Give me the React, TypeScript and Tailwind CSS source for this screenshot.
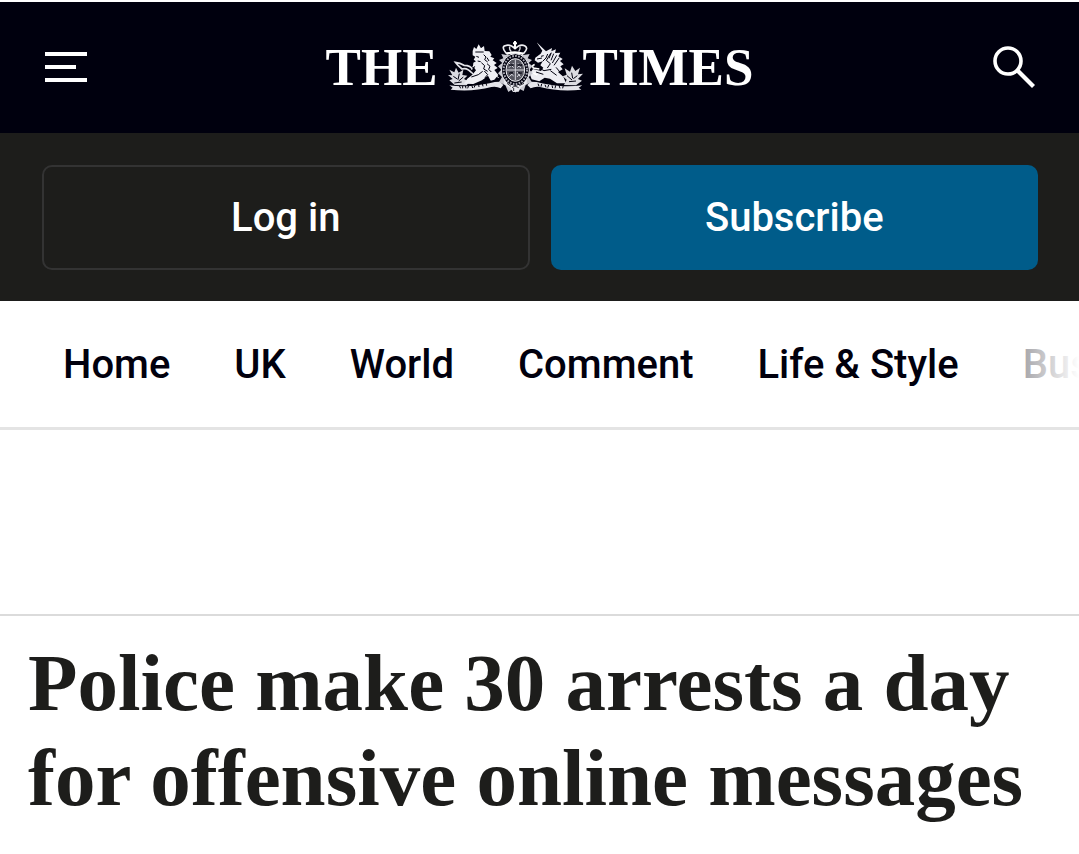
const sections = ["Home", "UK", "World", "Comment", "Life & Style", "Business"];

function Crest() {
  return (
    <svg viewBox="30 18 405 156" className="ml-2.5 h-[52px] w-[135px] shrink-0" fill="none" aria-hidden="true">
      {/* motto ribbon */}
      <path d="M34 151 Q62 155 98 153 Q140 149 170 141 L186 140 L196 150 L188 160 Q176 153 160 156 Q104 171 38 164 L44 158Z" fill="#e4e4ea" />
      <path d="M433 151 Q400 155 366 153 Q324 149 296 141 L278 140 L268 150 L278 160 Q292 153 306 156 Q364 171 430 164 L422 158Z" fill="#e4e4ea" />
      <path d="M64 152l4 8m6-8v8m8-8l2 8m8-9l-3 9m12-10l3 9m8-10l-4 9m14-10l1 8m10-10l2 8m9-10l2 8" stroke="#00000e" strokeWidth="3" />
      <path d="M300 146l3 8m8-7l-2 8m12-6l3 8m8-7l-3 8m13-7l2 8m9-8l-2 9m12-9l3 9m10-9l-2 9" stroke="#00000e" strokeWidth="3" />
      {/* thistles and roses at the ends */}
      <path d="M50 150 L34 136 L44 132 L30 120 L43 121 L34 104 L49 112 L54 98 L62 113 L76 104 L73 120 L88 122 L78 132 L94 140 L86 151Z" fill="#dcdce2" />
      <path d="M414 151 L432 137 L420 132 L435 116 L420 118 L426 98 L412 108 L402 92 L396 110 L380 100 L386 119 L374 124 L386 134 L378 150Z" fill="#dcdce2" />
      <path d="M46 124l12 8m6-16l-4 18m16-8l-14 12M418 122l-12 9m-5-18l3 17m-17-8l15 13m-9 5l21-2M49 144l22-3" stroke="#00000e" strokeWidth="3" />
      {/* lion */}
      <path d="M104 48 L108 36 L115 42 L122 28 L129 40 L138 33 L140 48 L154 49 L161 60 L157 65 L169 70 L164 76 L176 84 L168 90 L179 99 L169 105 L181 120 L169 134 L158 137 L150 122 L132 136 L106 147 L78 146 L88 131 L103 119 L114 106 L105 94 L106 83 L114 79 L107 74 L112 65 L104 61Z" fill="#efeff4" />
      <path d="M105 117 Q87 96 72 102 Q60 93 52 82 Q66 84 78 91 Q99 91 103 104" stroke="#e4e4ea" strokeWidth="5" />
      <path d="M112 51h25m-22 13l8 3m-4 11l9 2m9-21l7 7-4 8 9 7m-19 2l10 9-3 10 12 7m-2-41l6 10m-6 8l9 8-4 9 8 8m-50-17l-8 15m-2 17l21-7 13-10m-34 7l-15 15m54-23l10 11-8 9 16 8" stroke="#00000e" strokeWidth="3" />
      <path d="M120 42l3-8m7 8l3-4m-24 53l-6 5m71 25l8 8" stroke="#fff" strokeWidth="3" />
      {/* unicorn */}
      <path d="M296 22 L324 49 L342 39 L340 49 L354 43 L351 54 L367 53 L361 64 L374 72 L366 78 L377 88 L367 94 L374 103 L360 111 L376 125 L384 145 L357 145 L336 131 L320 128 L304 139 L281 133 L275 116 L285 102 L309 108 L316 98 L307 91 L314 79 L300 83 L290 76 L292 68 L308 56 L313 47Z" fill="#ececf2" />
      <path d="M309 64l8-2m-20 10l15-3m17-12l-5 12-10 10m26-26l-7 17m14-14l-8 20m17-15l-13 23m21-16l-16 23m-10-36l-13 21 12 10-9 13m-30-3l20 11 22-4m-46 8l22 7m21-11l19 14m-2-24l18 21" stroke="#00000e" strokeWidth="3" />
      <path d="M290 89 Q280 91 286 99 L304 102 M286 114 L298 120" stroke="#fff" strokeWidth="5" />
      {/* crown */}
      <path d="M204 54 Q187 34 205 31 Q218 28 231 41 Q246 26 260 32 Q273 39 257 55Z" stroke="#efeff4" strokeWidth="5" />
      <path d="M231 18v24m-6-17h12M205 57q26-10 51 0" stroke="#fff" strokeWidth="6" />
      <path d="M215 35q-2 9 5 15m26-15q2 8-4 15" stroke="#dcdce2" strokeWidth="4" />
      {/* mantling and ribbon round the shield */}
      <path d="M205 60 L190 57 L196 70 L183 75 L193 84 L180 94 L190 104 L180 115 L192 126 L183 141 L202 151 L211 171 L225 161 L232 173 L241 160 L257 168 L263 150 L281 141 L272 126 L284 115 L274 104 L284 94 L272 84 L282 75 L269 70 L275 57 L257 60Z" fill="#c9c9d1" />
      <ellipse cx="232" cy="105" rx="42" ry="49" fill="#00000e" stroke="#eeeef3" strokeWidth="3" />
      <ellipse cx="232" cy="105" rx="35" ry="42" stroke="#a9a9b3" strokeWidth="6" strokeDasharray="5 4" />
      <ellipse cx="232" cy="105" rx="28" ry="34" fill="#55555f" stroke="#f4f4f8" strokeWidth="3" />
      <path d="M232 73v63m-26-31h52M213 84l14 14m-14 0l14-14m13 1l8 14m2-13l-12 12m-25 13l14 12m-13 2l13-12m10-2l10 14m2-14l-12 15" stroke="#d8d8df" strokeWidth="3" />
      <path d="M214 90h12m13 0h13m-39 24h13m15 0h10" stroke="#00000e" strokeWidth="4" />
      <path d="M196 130 L211 147 L232 154 L254 147 L267 131 L266 146 L248 158 L242 170 L225 171 L216 158 L199 148Z" fill="#e8e8ee" />
      <path d="M207 145l12 9m3 4l9-5 11 5m2-6l14-7m-31 14v9" stroke="#33333d" strokeWidth="3" />
    </svg>
  );
}

export default function App() {
  return (
    <div className="min-h-screen bg-white font-['Roboto',sans-serif]">
      <header className="pt-0.5">
        <div className="flex h-[131px] items-center justify-between bg-[#00000e] px-11 pb-0.5">
          <button type="button" aria-label="Menu" className="flex w-11 justify-start">
            <svg viewBox="0 0 44 32" className="h-8 w-11" fill="#fff" aria-hidden="true">
              <path d="M1 1h42v4H1zM1 14h31v4H1zM1 27h42v4H1z" />
            </svg>
          </button>
          <a
            href="#home"
            className="flex items-center font-['Liberation_Serif',serif] text-[53px] leading-[60px] font-bold text-white"
          >
            <span>THE</span>
            <Crest />
            <span>TIMES</span>
          </a>
          <button type="button" aria-label="Search" className="w-11">
            <svg viewBox="0 0 44 44" className="size-11" fill="none" stroke="#fff" aria-hidden="true">
              <circle cx="17" cy="16" r="13" strokeWidth="3.6" />
              <path d="M26.5 25.5L42.5 41.5" strokeWidth="4.2" />
            </svg>
          </button>
        </div>
        <div className="grid grid-cols-2 gap-[21px] bg-[#1d1d1b] pt-8 pr-[41px] pb-[31px] pl-[42px] text-[40px] font-medium text-white">
          <button type="button" className="h-[105px] rounded-[10px] border-2 border-[#333333]">
            Log in
          </button>
          <button type="button" className="h-[105px] rounded-[10px] bg-[#005c8a]">
            Subscribe
          </button>
        </div>
        <nav className="relative overflow-hidden border-b-[3px] border-[#e4e4e4]">
          <ul className="flex h-[126px] items-center gap-16 px-[63px] pt-0.5 text-[40px] font-medium whitespace-nowrap text-[#01000d]">
            {sections.map((name) => (
              <li key={name}>
                <a href="#sections">{name}</a>
              </li>
            ))}
          </ul>
          <div className="pointer-events-none absolute inset-y-0 right-0 w-20 bg-linear-to-r from-white/50 to-white" />
        </nav>
      </header>
      <main>
        <div className="h-[186px] border-b-2 border-[#dbdbdb]" />
        <h1 className="px-7 pt-5 pb-6 font-['Liberation_Serif',serif] text-[81px] leading-[95px] font-bold text-[#1d1d1b]">
          Police make 30 arrests a day for offensive online messages
        </h1>
      </main>
    </div>
  );
}
